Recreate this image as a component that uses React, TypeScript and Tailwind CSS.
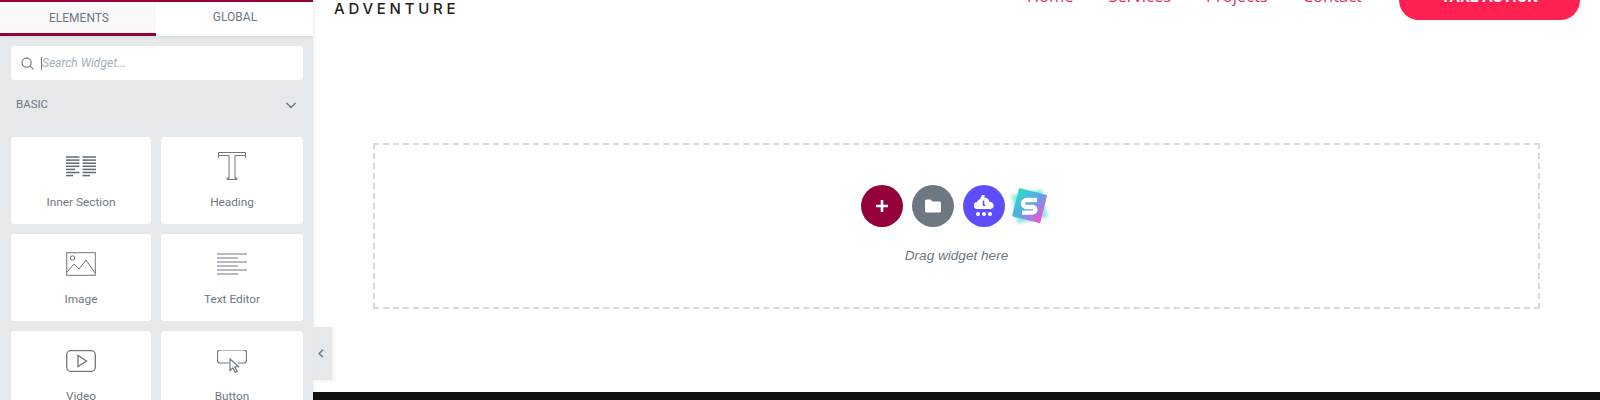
import React from "react";

const stroke = { fill: "none", stroke: "#6d7882", strokeWidth: 1 };

function InnerSection() {
  const l = [0, 3.1, 6.2, 9.3, 12.4, 15.5, 18.6];
  return (
    <svg width="30" height="21" viewBox="0 0 30 21" fill="none" stroke="#5f6a74" strokeWidth="1.5">
      {l.map((y, i) => (
        <g key={y}>
          <path d={`M0 ${y + 1}H${i === 6 ? 7 : i === 4 ? 9 : 13.5}`} />
          <path d={`M16.5 ${y + 1}H${i === 6 ? 24 : 30}`} />
        </g>
      ))}
    </svg>
  );
}
function HeadingIcon() {
  return (
    <svg width="30" height="30" viewBox="0 0 30 30" {...stroke}>
      <path d="M1.5 7V1.5h27V7M1.5 4.5h10.5V28M28.5 4.5H18V28M12 27h-2v1.5h10V27h-2" />
    </svg>
  );
}
function ImageIcon() {
  return (
    <svg width="30" height="24" viewBox="0 0 30 24" className="translate-y-px" {...stroke}>
      <rect x="0.7" y="0.7" width="28.6" height="22.6" />
      <circle cx="6.5" cy="6" r="2.2" />
      <path d="M1 20l7-8 5 5 7-9 9 13" />
    </svg>
  );
}
function TextIcon() {
  return (
    <svg width="30" height="22" viewBox="0 0 30 22" fill="none" stroke="#6d7882" strokeWidth="1.1" className="translate-y-px">
      <path d="M0 1h30M0 5h21M0 9h30M0 13h21M0 17h30M0 21h21" />
    </svg>
  );
}
function VideoIcon() {
  return (
    <svg width="30" height="22" viewBox="0 0 30 22" fill="none" stroke="#6d7882" strokeWidth="1.3" className="translate-y-px">
      <rect x="0.7" y="0.7" width="28.6" height="20.6" rx="4" />
      <path d="M12 5.5v11l8.5-5.5z" />
    </svg>
  );
}
function ButtonIcon() {
  return (
    <svg width="30" height="23" viewBox="0 0 30 23" fill="none" stroke="#6d7882" strokeWidth="1.2" className="translate-y-px">
      <path d="M12 13H3a2.5 2.5 0 0 1-2.5-2.5v-8A2.5 2.5 0 0 1 3 0h24a2.5 2.5 0 0 1 2.5 2.5v8A2.5 2.5 0 0 1 27 13h-6" />
      <path d="M13 9l8.5 7.5-3.7.4 2.4 4.3-2 1.2-2.4-4.4-2.8 2.6z" fill="#fff" />
    </svg>
  );
}

function Card({ icon, label }: { icon: React.ReactNode; label: string }) {
  return (
    <div className="h-[87px] shrink-0 flex flex-col items-center bg-white rounded-[3px]">
      <div className="h-[55px] w-full flex items-center justify-center pt-[3px]">{icon}</div>
      <div className="mt-[2px] text-[11.8px] leading-[16px] text-[#6d7882]">{label}</div>
    </div>
  );
}

export default function App() {
  return (
    <div
      className="flex w-[1600px] h-[400px] overflow-hidden bg-white relative"
      style={{ fontFamily: "Roboto, sans-serif" }}
    >
      <aside className="w-[313px] h-[400px] shrink-0 bg-[#e6e9ec] overflow-hidden flex flex-col shadow-[1px_0_3px_rgba(0,0,0,0.08)]">
        <div className="h-[36px] shrink-0 flex text-[12px] text-[#6d7882] bg-white border-t-2 border-[#93003a] shadow-[0_1px_3px_rgba(0,0,0,0.08)]">
          <div className="w-[156px] flex items-center justify-center bg-[#fbf8f9] border-b-[3px] border-[#93003a] pl-[2px]">
            ELEMENTS
          </div>
          <div className="flex-1 flex items-center justify-center pb-[4px] pl-[1px]">GLOBAL</div>
        </div>
        <div className="ml-[11px] mr-[10px] mt-[10px] h-[34px] shrink-0 bg-white rounded-[3px] flex items-center pl-[10px]">
          <svg width="13" height="13" viewBox="0 0 13 13" fill="none" stroke="#7d8790" strokeWidth="1.3">
            <circle cx="5.6" cy="5.6" r="4.6" />
            <path d="M9 9l3.4 3.4" />
          </svg>
          <span className="ml-[7px] w-px h-[13px] bg-[#6d7882]" />
          <span className="text-[12px] italic text-[#a4afb7]">Search Widget...</span>
        </div>
        <div className="mx-[16px] mt-[16px] h-[18px] shrink-0 flex items-center justify-between pr-[1px]">
          <span className="text-[11.5px] text-[#6d7882]">BASIC</span>
          <svg width="10" height="7" viewBox="0 0 10 7" fill="none" stroke="#6d7882" strokeWidth="1.5">
            <path d="M0.5 1l4.5 4.5L9.5 1" />
          </svg>
        </div>
        <div className="ml-[11px] mr-[10px] mt-[23px] grid grid-cols-[140px_142px] gap-x-[10px] gap-y-[10px]">
          <Card icon={<InnerSection />} label="Inner Section" />
          <Card icon={<HeadingIcon />} label="Heading" />
          <Card icon={<ImageIcon />} label="Image" />
          <Card icon={<TextIcon />} label="Text Editor" />
          <Card icon={<VideoIcon />} label="Video" />
          <Card icon={<ButtonIcon />} label="Button" />
        </div>
      </aside>

      <div className="absolute left-[313px] top-[327px] w-[19px] h-[53px] bg-[#e6e9ec] flex items-center justify-center pr-[3px] shadow-[2px_1px_4px_rgba(0,0,0,0.06)]">
        <svg width="6" height="9" viewBox="0 0 6 9" fill="none" stroke="#6d7882" strokeWidth="1.6">
          <path d="M5 0.8L1.2 4.5 5 8.2" />
        </svg>
      </div>

      <main className="flex-1 flex flex-col h-[400px]">
        <header className="h-[20px] shrink-0 relative flex items-end overflow-hidden">
          <div
            className="ml-[21px] mb-[4px] text-[15px] leading-[15px] font-medium tracking-[3.75px] text-[#222]"
            style={{ fontFamily: "Inter, sans-serif" }}
          >
            ADVENTURE
          </div>
          <nav
            className="ml-auto flex items-end gap-[35px] text-[16.5px] leading-[22px] text-[#d6336c] mb-[13px]"
            style={{ fontFamily: "'Open Sans', sans-serif" }}
          >
            <span>Home</span>
            <span>Services</span>
            <span>Projects</span>
            <span>Contact</span>
          </nav>
          <div className="ml-[37px] mr-[20px] w-[181px] h-[50px] shrink-0 bg-[#ff2052] rounded-[20px] flex items-end justify-center pb-[15px] text-[15.5px] leading-[16px] font-bold text-white">
            TAKE ACTION
          </div>
        </header>

        <section className="mt-[123px] mx-[60px] h-[166px] shrink-0 border-2 border-dashed border-[#d5dadf] flex flex-col items-center pt-[40px]">
          <div className="flex items-center gap-[9px] -ml-[3px] h-[42px]">
            <div className="w-[42px] h-[42px] rounded-full bg-[#93003a] flex items-center justify-center">
              <svg width="14" height="14" viewBox="0 0 14 14" stroke="#fff" strokeWidth="2.6">
                <path d="M7 1v12M1 7h12" />
              </svg>
            </div>
            <div className="w-[42px] h-[42px] rounded-full bg-[#6d7882] flex items-center justify-center">
              <svg width="16" height="14" viewBox="0 0 16 14" fill="#fff">
                <path d="M0 2a1.5 1.5 0 0 1 1.5-1.5h4L7.5 2.5h7A1.5 1.5 0 0 1 16 4v8a1.5 1.5 0 0 1-1.5 1.5h-13A1.5 1.5 0 0 1 0 12z" />
              </svg>
            </div>
            <div className="w-[42px] h-[42px] rounded-full bg-[#5d4dfa] flex items-center justify-center">
              <svg width="20" height="24" viewBox="0 0 20 24" fill="#fff">
                <path d="M3.5 15a3.5 3.5 0 0 1-.5-7 5 5 0 0 1 3-3l2-4h2.5v2.5a5.5 5.5 0 0 1 5 4.5 3.5 3.5 0 0 1 1 7z" />
                <path d="M9.5 6.5V11a1.5 1.5 0 0 0 1.6 0" fill="none" stroke="#5d4dfa" strokeWidth="1.5" />
                <circle cx="4" cy="20" r="2" />
                <circle cx="10" cy="20" r="2" />
                <circle cx="16" cy="20" r="2" />
              </svg>
            </div>
            <svg width="42" height="42" viewBox="0 0 42 42" className="-ml-[6px]">
              <defs>
                <linearGradient id="sg" x1="0" y1="0.2" x2="1" y2="0.8">
                  <stop offset="0" stopColor="#33d6c8" />
                  <stop offset="0.5" stopColor="#5aa6ea" />
                  <stop offset="1" stopColor="#ee55d8" />
                </linearGradient>
                <filter id="bl">
                  <feGaussianBlur stdDeviation="1.4" />
                </filter>
              </defs>
              <rect x="6" y="7" width="31" height="29" transform="rotate(-12 21 21)" fill="#45d8cc" opacity="0.55" filter="url(#bl)" />
              <rect x="7" y="6" width="29" height="29" rx="1" transform="rotate(14 21 21)" fill="url(#sg)" />
              <path
                d="M29 15H18.5a3.5 3.5 0 0 0 0 7h6a2.8 2.8 0 0 1 0 5.6H14"
                fill="none"
                stroke="#fff"
                strokeWidth="4.4"
              />
            </svg>
          </div>
          <div
            className="mt-[20px] text-[13.6px] leading-[18px] italic text-[#6d7882]"
            style={{ fontFamily: "'Liberation Sans', sans-serif" }}
          >
            Drag widget here
          </div>
        </section>

        <div className="mt-auto h-[8px] bg-[#111]" />
      </main>
    </div>
  );
}
